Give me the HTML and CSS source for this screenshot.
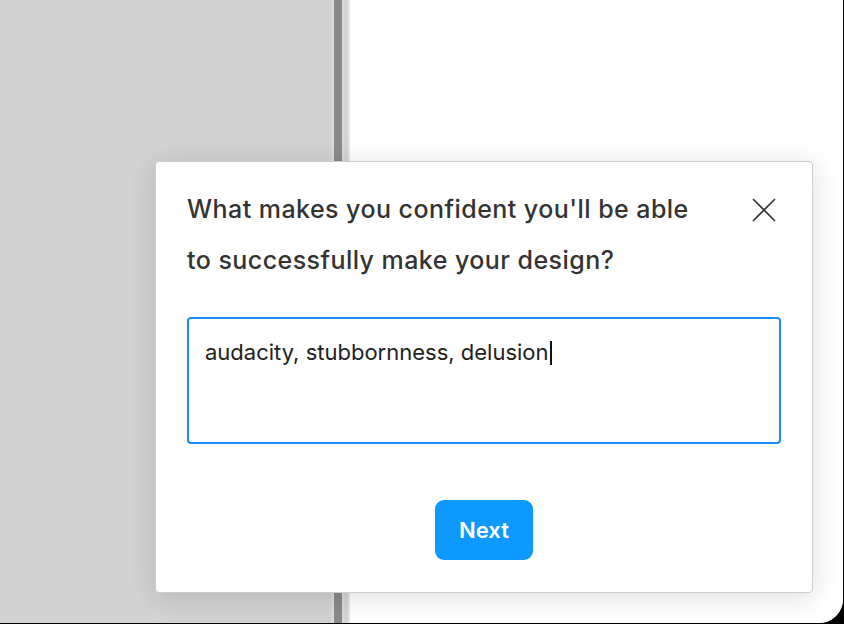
FILE: index.html
```html
<!DOCTYPE html>
<html lang="en">
<head>
    <meta charset="UTF-8">
    <meta name="viewport" content="width=device-width, initial-scale=1.0">
    <title>Question</title>
    <link rel="stylesheet" href="styles.css">
</head>
<body>

    <div class="window">
        <div class="sidebar"></div>
        <div class="divider">
            <div class="handle"></div>
        </div>
        <div class="canvas"></div>
    </div>

    <!-- Question modal -->
    <div class="modal">
        <div class="modal-head">
            <h3>What makes you confident you'll be able to successfully make your design?</h3>
            <span class="close">
                <svg width="26" height="26" viewBox="0 0 26 26">
                    <path d="M2 2 L24 24 M24 2 L2 24" stroke="#333" stroke-width="1.6" fill="none"/>
                </svg>
            </span>
        </div>
        <div class="answer">audacity, stubbornness, delusion<span class="caret"></span></div>
        <div class="actions">
            <button class="next">Next</button>
        </div>
    </div>

</body>
</html>
```

FILE: styles.css
```css
body {
    margin: 0;
    padding: 0;
    background-color: #000;
    font-family: Inter, "Noto Sans", sans-serif;
    width: 844px;
    height: 624px;
    overflow: hidden;
}

.window {
    display: flex;
    width: 843px;
    height: 623px;
    background-color: #fff;
    border-bottom-right-radius: 24px;
    overflow: hidden;
}

.sidebar {
    width: 332px;
    background-color: #d2d2d2;
}

.divider {
    width: 18px;
    background-color: #d4d4d4;
    border-left: 2px solid #dcdcdc;
    border-right: 2px solid #e6e6e6;
    box-sizing: border-box;
}

.handle {
    width: 8px;
    height: 100%;
    background-color: #8a8a8a;
    border-right: 2px solid #dadada;
}

.canvas {
    flex: 1;
    background-color: #fff;
}

/* Modal */
.modal {
    position: absolute;
    left: 155px;
    top: 161px;
    width: 658px;
    height: 432px;
    box-sizing: border-box;
    background-color: #fff;
    border: 1px solid #cdcdcd;
    border-radius: 4px;
    box-shadow: 0 4px 28px rgba(0, 0, 0, 0.14);
    padding: 22px 31px 32px 31px;
    display: flex;
    flex-direction: column;
}

.modal-head {
    display: flex;
    justify-content: space-between;
    align-items: flex-start;
}

.modal-head h3 {
    margin: 0;
    width: 518px;
    font-size: 25px;
    font-weight: 500;
    letter-spacing: 0.45px;
    line-height: 51px;
    color: #333;
}

.close {
    margin-top: 13px;
    margin-right: 4px;
    cursor: pointer;
}

.answer {
    margin-top: 31px;
    height: 127px;
    box-sizing: border-box;
    border: 2px solid #1a8cff;
    border-radius: 4px;
    padding: 19px 16px;
    font-size: 22px;
    color: #222;
    line-height: 28px;
}

.caret {
    display: inline-block;
    width: 2px;
    height: 24px;
    background-color: #111;
    vertical-align: -5px;
    margin-left: 1px;
}

.actions {
    margin-top: auto;
    text-align: center;
}

.next {
    background-color: #0d99ff;
    color: white;
    font-family: Inter, "Noto Sans", sans-serif;
    font-size: 22px;
    font-weight: 600;
    width: 98px;
    height: 60px;
    border: none;
    border-radius: 9px;
    cursor: pointer;
}
```
